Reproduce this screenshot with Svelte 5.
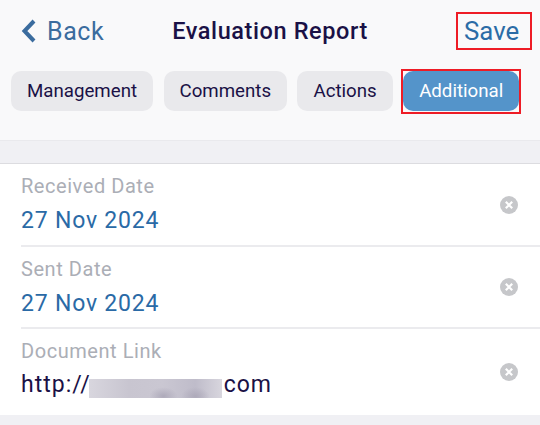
<script>
  const tabs = [
    { label: "Management" },
    { label: "Comments" },
    { label: "Actions" },
    { label: "Additional", active: true },
  ];
  const dates = [
    { label: "Received Date", value: "27 Nov 2024" },
    { label: "Sent Date", value: "27 Nov 2024" },
  ];
</script>

<div class="screen">
  <header class="top">
    <div class="nav">
      <div class="side">
        <span class="back">
          <svg width="16" height="24" viewBox="0 0 16 24" aria-hidden="true">
            <path d="M13 2 3.500 12l9.500 10" fill="none" stroke="#3b6c9e" stroke-width="4" />
          </svg>
          Back
        </span>
      </div>
      <h1>Evaluation Report</h1>
      <div class="side end">
        <span class="save">Save</span>
      </div>
    </div>
    <div class="tabs">
      {#each tabs as tab}
        <span class="tab-wrap" class:marked={tab.active}>
          <span class="tab" class:active={tab.active}>{tab.label}</span>
        </span>
      {/each}
    </div>
  </header>

  <div class="band"></div>

  <section class="fields">
    {#each dates as field}
      <div class="field">
        <div class="text">
          <div class="label">{field.label}</div>
          <div class="value blue">{field.value}</div>
        </div>
        {@render clear()}
      </div>
    {/each}
    <div class="field last">
      <div class="text">
        <div class="label">Document Link</div>
        <div class="value">http://<span class="redacted"></span>com</div>
      </div>
      {@render clear()}
    </div>
  </section>
</div>

{#snippet clear()}
  <svg class="clear" width="20" height="20" viewBox="0 0 20 20" aria-hidden="true">
    <circle cx="10" cy="10" r="9" fill="#c6c7ca" />
    <path d="M6.800 6.800l6.400 6.400M13.200 6.800l-6.400 6.400" stroke="#fff" stroke-width="2.200" />
  </svg>
{/snippet}

<style>
  :global(body) {
    margin: 0;
    background: #f0f0f4;
    font-family: Roboto, "Liberation Sans", sans-serif;
  }

  .screen {
    width: 540px;
    height: 425px;
    overflow: hidden;
  }

  .top {
    height: 140px;
    background: #f9f9fa;
    border-bottom: 1px solid #e9e9ed;
  }

  .nav {
    height: 62px;
    padding: 0 8px;
    display: flex;
    align-items: center;
  }

  .side {
    flex: 1;
    display: flex;
  }

  .side.end {
    justify-content: flex-end;
  }

  .back {
    padding-left: 13px;
    display: flex;
    align-items: center;
    gap: 10px;
    font-size: 25px;
    letter-spacing: 0.6px;
    color: #3b6c9e;
  }

  h1 {
    margin: 0;
    font-size: 23.500px;
    font-weight: 500;
    letter-spacing: 0.6px;
    color: #1a1146;
  }

  .save {
    box-sizing: border-box;
    width: 76px;
    height: 38px;
    padding-left: 6px;
    border: 2px solid #ee1c25;
    display: flex;
    align-items: center;
    font-size: 25.800px;
    color: #2b6ca6;
  }

  .tabs {
    display: flex;
    gap: 10.400px;
    padding: 9px 0 0 11px;
  }

  .tab-wrap {
    display: flex;
  }

  .tab {
    height: 40px;
    padding: 0 16px;
    display: flex;
    align-items: center;
    border-radius: 10px;
    background: #e9e9ec;
    font-size: 18.700px;
    color: #1a1146;
  }

  .tab.active {
    background: #5494ca;
    color: #fff;
  }

  .marked {
    margin: -2px;
    padding: 0 0 1px;
    border: 2px solid #ee1c25;
  }

  .band {
    height: 22px;
    background: #f0f0f4;
    border-bottom: 1px solid #dcdce0;
  }

  .fields {
    background: #fff;
  }

  .field {
    box-sizing: border-box;
    height: 82px;
    margin-left: 21px;
    padding: 11px 21px 0 0;
    display: flex;
    justify-content: space-between;
    border-bottom: 2px solid #ebebee;
  }

  .field:first-child {
    height: 83px;
  }

  .field.last {
    height: 86px;
    border-bottom: none;
  }

  .label {
    font-size: 20px;
    line-height: 23px;
    letter-spacing: 0.55px;
    color: #abaeb6;
  }

  .value {
    margin-top: 9px;
    font-size: 23px;
    line-height: 28px;
    letter-spacing: 0.8px;
    color: #1a1146;
    display: flex;
    align-items: center;
  }

  .last .value {
    margin-top: 8px;
    letter-spacing: 1px;
  }

  .value.blue {
    color: #2a6aa6;
  }

  .redacted {
    width: 133px;
    height: 19px;
    margin: 7px 2px 0 -2px;
    background:
      radial-gradient(ellipse 14px 9px at 56% 90%, #aeaaba, transparent),
      radial-gradient(ellipse 14px 9px at 80% 90%, #aeaaba, transparent),
      linear-gradient(90deg, #d8d6de, #c8c5d0 30%, #cac7d2 55%, #bfbcca 80%, #d8d6de);
  }

  .clear {
    align-self: center;
    margin-top: -11px;
  }
</style>
